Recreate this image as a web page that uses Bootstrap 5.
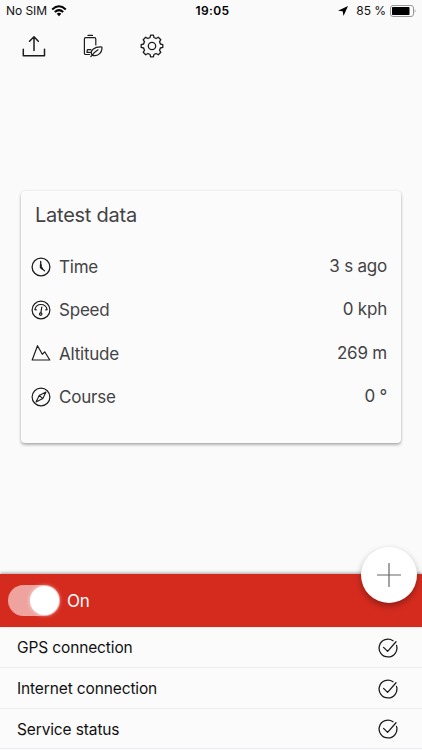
<!DOCTYPE html>
<html lang="en">
<head>
<meta charset="utf-8">
<meta name="viewport" content="width=device-width, initial-scale=1">
<title>Tracker</title>
<link href="https://cdn.jsdelivr.net/npm/bootstrap@5.3.0/dist/css/bootstrap.min.css" rel="stylesheet">
<style>
body{font-family:Inter,"Liberation Sans",sans-serif;background:#fafafa;color:#434345;height:750px;overflow:hidden}
svg{display:block;flex:none;fill:none;stroke:#1c1c1e;stroke-linecap:round;stroke-linejoin:round}
.solid{fill:#000;stroke:none}
.status-bar{height:22px;font-size:12px;line-height:22px;color:#111;padding:0 6px 0 6px}
.status-bar>div{flex:1 1 0}
.status-bar .label{letter-spacing:-.05px}
.clock-text{font-weight:600;font-size:12px;letter-spacing:.35px;color:#000;padding-left:3px}
.tools{height:48px;padding:0 22px;gap:35px}
.data-card{margin:121px 21px 0 21px;height:252px;padding:12px 14px 0 10px;background:#fbfbfb;border:0;border-radius:4px;box-shadow:0 2px 3px rgba(0,0,0,.28),0 0 3px rgba(0,0,0,.1)}
.data-title{font-size:20px;line-height:25px;margin:0 0 17px 4px;letter-spacing:-.25px;font-weight:400}
.data-row{height:43.4px;font-size:17px;gap:8px;letter-spacing:-.22px}
.data-row span{padding-top:1.6px}
.data-row .value{padding-top:0;margin-top:-.4px}
.bottom-panel{height:176px}
.power{height:53px;background:#d52b1e;color:#fff;padding-left:8px;gap:7px;font-size:17px;letter-spacing:-.3px;box-shadow:0 -1px 3px rgba(0,0,0,.35)}
.power span{padding-top:2px}
.toggle{width:52px;height:31px;border-radius:16px;background:#eea39e;padding:1px}
.knob{width:29px;height:29px;border-radius:50%;background:#fff;box-shadow:0 0 4px rgba(255,255,255,.7)}
.fab{position:absolute;right:5px;top:-27px;width:56px;height:56px;background:#fff;box-shadow:0 3px 6px rgba(0,0,0,.32)}
.check-row{height:40.8px;font-size:15.5px;color:#111;padding:2px 24.5px 0 17px;border-bottom:1px solid #ececf0;letter-spacing:-.13px;background:#fbfbfb}
</style>
</head>
<body class="d-flex flex-column">
<svg width="0" height="0" class="position-absolute"><defs>
<symbol id="check" viewBox="0 0 20 20"><path d="M18.500 7.400A8.900 8.900 0 1 1 15 2.700M5.600 9.400l4 4L18 3.800"/></symbol>
</defs></svg>
<header>
<div class="status-bar d-flex align-items-center">
<div class="d-flex align-items-center gap-1"><span class="label">No SIM</span>
<svg class="ms-0" width="16" height="12" viewBox="0 0 16 12" stroke-width="2"><path d="M1.200 4.400Q8-1.800 14.800 4.400M3.800 7Q8 3.200 12.200 7" stroke="#000" stroke-linecap="butt"/><path class="solid" d="M5.700 8.700Q8 6.800 10.300 8.700L8 11.200z"/></svg></div>
<span class="clock-text">19:05</span>
<div class="d-flex align-items-center justify-content-end">
<svg width="10" height="10" viewBox="0 0 10 10"><path class="solid" d="M10 0L5.500 10 4.700 5.300 0 4.700z"/></svg>
<span class="label ms-2">85 %</span>
<svg class="ms-1" width="26" height="12" viewBox="0 0 26 12"><rect x=".5" y=".5" width="23" height="11" rx="2.500" stroke="#999"/><rect class="solid" x="2" y="2" width="17.500" height="8" rx=".8"/><path d="M24.700 4v4q1.600-2 0-4" fill="#999" stroke="none"/></svg></div>
</div>
<nav class="tools d-flex align-items-center">
<svg width="24" height="24" viewBox="0 0 24 24" stroke-width="1.500"><path d="M1.300 15.200v6.500h21.200v-6.500M12 16.500V3M7.500 7.200L12 2.800l4.300 4.400"/></svg>
<svg width="24" height="24" viewBox="0 0 24 24" stroke-width="1.200"><path d="M8.600 20.500H4.700Q3.400 20.500 3.400 19.200V4.900Q3.400 3.600 4.700 3.600H13.500q1.300 0 1.300 1.300v6M7 1.400h4.500M9.800 15.700H6.400l-.5 2.600h3.300M9.800 22.600c2-3 4.300-5 7.200-6.800M11 21.100c-2.600-4.400 2-8.500 9.900-8.100.5 5.600-4 10-9.900 8.100z"/></svg>
<svg width="24" height="24" viewBox="0 0 24 24" stroke-width="1.300"><circle cx="12" cy="12" r="3.700"/><path d="M10.600 1.200h2.800l.6 2.400q1.200.3 2.100.9l2.200-1.300 2.500 2.500-1.300 2.200q.6.900.9 2.100l2.400.6v2.800l-2.400.6q-.3 1.200-.9 2.100l1.300 2.200-2.500 2.500-2.200-1.300q-.9.600-2.100.9l-.6 2.400h-2.800l-.6-2.400q-1.200-.3-2.100-.9l-2.200 1.300-2.500-2.500 1.300-2.200q-.6-.9-.9-2.100l-2.400-.6v-2.800l2.400-.6q.3-1.200.9-2.100L3.200 5.700l2.500-2.500 2.200 1.300q.9-.6 2.100-.9z"/></svg>
</nav>
</header>
<main class="flex-grow-1">
<section class="card data-card">
<h1 class="data-title">Latest data</h1>
<div class="data-row d-flex align-items-center"><svg width="20" height="20" viewBox="0 0 20 20" stroke-width="1.300"><circle cx="10" cy="10" r="8.900"/><path d="M9.700 4.500v5.700l3.800 3.700"/><path d="M9.800 8v2.300l1.200 1.200" stroke-width="2"/></svg><span>Time</span><span class="value ms-auto">3 s ago</span></div>
<div class="data-row d-flex align-items-center"><svg width="20" height="20" viewBox="0 0 20 20" stroke-width="1.200"><circle cx="10" cy="10" r="8.900"/><path d="M3.900 9.600A6.200 6.200 0 0 1 16.100 9.600M3.900 9.600l1.400.3M16.100 9.600l-1.400.3M10.800 7L9.900 12.700"/><circle cx="9.700" cy="14.100" r="1.200"/></svg><span>Speed</span><span class="value ms-auto">0 kph</span></div>
<div class="data-row d-flex align-items-center"><svg width="20" height="20" viewBox="0 0 20 20" stroke-width="1.200"><path d="M1.200 17L6.500 2.700 11.300 11.300 13.700 8.800 18.800 17z"/></svg><span>Altitude</span><span class="value ms-auto">269 m</span></div>
<div class="data-row d-flex align-items-center"><svg width="20" height="20" viewBox="0 0 20 20" stroke-width="1.200"><circle cx="10" cy="10" r="8.900"/><path d="M15 5L11.800 11.600 5 15 8.200 8.400zM8.200 8.400l3.600 3.200" stroke-width="1.100"/></svg><span>Course</span><span class="value ms-auto">0 °</span></div>
</section>
</main>
<footer class="bottom-panel">
<div class="power position-relative d-flex align-items-center">
<div class="toggle d-flex justify-content-end"><div class="knob"></div></div><span>On</span>
<button class="fab btn rounded-circle border-0 p-0 d-flex align-items-center justify-content-center" aria-label="Add"><svg width="24" height="24" viewBox="0 0 24 24"><path d="M12 .5v23M.5 12h23" stroke="#666" stroke-width="1.200"/></svg></button>
</div>
<div class="check-row d-flex align-items-center justify-content-between"><span>GPS connection</span><svg width="20" height="20" stroke-width="1.300"><use href="#check"/></svg></div>
<div class="check-row d-flex align-items-center justify-content-between"><span>Internet connection</span><svg width="20" height="20" stroke-width="1.300"><use href="#check"/></svg></div>
<div class="check-row d-flex align-items-center justify-content-between"><span>Service status</span><svg width="20" height="20" stroke-width="1.300"><use href="#check"/></svg></div>
</footer>
<script src="https://cdn.jsdelivr.net/npm/bootstrap@5.3.0/dist/js/bootstrap.bundle.min.js"></script>
</body>
</html>
